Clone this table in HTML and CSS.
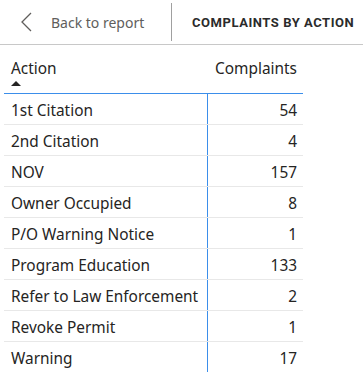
FILE: index.html
```html
<!DOCTYPE html>
<html>
<head>
<meta charset="utf-8">
<link rel="stylesheet" href="styles.css">
</head>
<body>
<div class="topbar">
  <div class="back">
    <svg class="chev" width="12" height="20" viewBox="0 0 12 20"><path d="M11 1 L2 10 L11 19" fill="none" stroke="#605e5c" stroke-width="1.3"/></svg>
    <span class="back-text">Back to report</span>
  </div>
  <div class="sep"></div>
  <div class="title">COMPLAINTS BY ACTION</div>
</div>
<div class="table">
  <div class="thead">
    <div class="th th-action"><span>Action</span><span class="sort"></span></div>
    <div class="th th-num">Complaints</div>
  </div>
  <div class="row"><div class="c1">1st Citation</div><div class="c2">54</div></div>
  <div class="row"><div class="c1">2nd Citation</div><div class="c2">4</div></div>
  <div class="row"><div class="c1">NOV</div><div class="c2">157</div></div>
  <div class="row"><div class="c1">Owner Occupied</div><div class="c2">8</div></div>
  <div class="row"><div class="c1">P/O Warning Notice</div><div class="c2">1</div></div>
  <div class="row"><div class="c1">Program Education</div><div class="c2">133</div></div>
  <div class="row"><div class="c1">Refer to Law Enforcement</div><div class="c2">2</div></div>
  <div class="row"><div class="c1">Revoke Permit</div><div class="c2">1</div></div>
  <div class="row last"><div class="c1">Warning</div><div class="c2">17</div></div>
</div>
</body>
</html>
```
FILE: styles.css
```css
html, body {
  margin: 0;
  padding: 0;
  background: #ffffff;
}
body {
  font-family: "Noto Sans", "Open Sans", sans-serif;
  color: #252423;
}
.topbar {
  border-bottom: 1px solid #c8c8c8;
  display: flex;
  align-items: center;
  box-sizing: border-box;
  height: 45px;
}
.back {
  display: flex;
  align-items: center;
  padding-left: 20px;
  width: 171px;
  box-sizing: border-box;
}
.chev {
  display: block;
  margin-right: 19px;
}
.back-text {
  font-size: 14px;
  color: #605e5c;
}
.sep {
  width: 1px;
  height: 38px;
  background: #a0a0a0;
  margin-top: -1px;
}
.title {
  margin-left: 20px;
  font-family: "Roboto", sans-serif;
  font-weight: 700;
  font-size: 13px;
  letter-spacing: 0.55px;
  color: #2b2b2b;
}
.table {
  margin-left: 4px;
  width: 299px;
}
.thead {
  display: flex;
  border-bottom: 1px solid #3b8eea;
  box-sizing: border-box;
  height: 49px;
}
.th {
  font-size: 15.4px;
  padding-top: 14px;
  line-height: 20px;
}
.th-action {
  width: 203px;
  padding-left: 7px;
  box-sizing: border-box;
  display: flex;
  flex-direction: column;
}
.sort {
  width: 0;
  height: 0;
  border-left: 5.5px solid transparent;
  border-right: 5.5px solid transparent;
  border-bottom: 5px solid #252423;
  margin-top: 2px;
}
.th-num {
  flex: 1;
  text-align: right;
  padding-right: 6px;
}
.row {
  display: flex;
  height: 31px;
  border-bottom: 1px solid #e8e8e8;
  box-sizing: border-box;
  font-size: 15.4px;
  line-height: 26px;
  padding-top: 4px;
}
.row.last {
  border-bottom: none;
  height: 30px;
}
.c1 {
  width: 204px;
  padding-left: 7px;
  margin-top: -4px;
  padding-top: 4px;
  box-sizing: border-box;
  border-right: 1px solid #3b8eea;
  white-space: nowrap;
}
.c2 {
  flex: 1;
  text-align: right;
  padding-right: 6px;
}
```
